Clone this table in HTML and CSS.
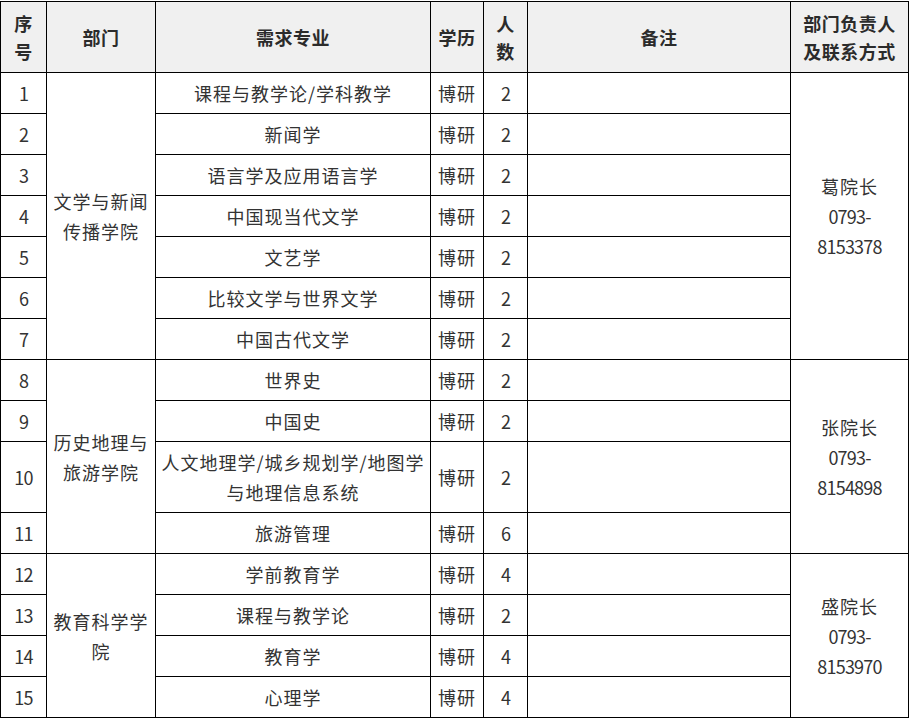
FILE: index.html
```html
<!DOCTYPE html>
<html lang="zh-CN">
<head>
<meta charset="utf-8">
<title>需求表</title>
<link rel="stylesheet" href="styles.css">
</head>
<body>
<table class="tbl">
  <colgroup>
    <col class="c-no">
    <col class="c-dept">
    <col class="c-major">
    <col class="c-edu">
    <col class="c-num">
    <col class="c-note">
    <col class="c-contact">
  </colgroup>
  <thead>
    <tr>
      <th>序<br>号</th>
      <th>部门</th>
      <th>需求专业</th>
      <th>学历</th>
      <th>人<br>数</th>
      <th>备注</th>
      <th>部门负责人<br>及联系方式</th>
    </tr>
  </thead>
  <tbody>
    <tr>
      <td class="num">1</td>
      <td rowspan="7">文学与新闻传播学院</td>
      <td>课程与教学论/学科教学</td>
      <td>博研</td>
      <td class="num">2</td>
      <td></td>
      <td rowspan="7">葛院长<br><span class="num">0793-</span><br><span class="num">8153378</span></td>
    </tr>
    <tr><td class="num">2</td><td>新闻学</td><td>博研</td><td class="num">2</td><td></td></tr>
    <tr><td class="num">3</td><td>语言学及应用语言学</td><td>博研</td><td class="num">2</td><td></td></tr>
    <tr><td class="num">4</td><td>中国现当代文学</td><td>博研</td><td class="num">2</td><td></td></tr>
    <tr><td class="num">5</td><td>文艺学</td><td>博研</td><td class="num">2</td><td></td></tr>
    <tr><td class="num">6</td><td>比较文学与世界文学</td><td>博研</td><td class="num">2</td><td></td></tr>
    <tr><td class="num">7</td><td>中国古代文学</td><td>博研</td><td class="num">2</td><td></td></tr>
    <tr>
      <td class="num">8</td>
      <td rowspan="4">历史地理与旅游学院</td>
      <td>世界史</td>
      <td>博研</td>
      <td class="num">2</td>
      <td></td>
      <td rowspan="4">张院长<br><span class="num">0793-</span><br><span class="num">8154898</span></td>
    </tr>
    <tr><td class="num">9</td><td>中国史</td><td>博研</td><td class="num">2</td><td></td></tr>
    <tr><td class="num">10</td><td>人文地理学/城乡规划学/地图学<br>与地理信息系统</td><td>博研</td><td class="num">2</td><td></td></tr>
    <tr><td class="num">11</td><td>旅游管理</td><td>博研</td><td class="num">6</td><td></td></tr>
    <tr>
      <td class="num">12</td>
      <td rowspan="4">教育科学学院</td>
      <td>学前教育学</td>
      <td>博研</td>
      <td class="num">4</td>
      <td></td>
      <td rowspan="4">盛院长<br><span class="num">0793-</span><br><span class="num">8153970</span></td>
    </tr>
    <tr><td class="num">13</td><td>课程与教学论</td><td>博研</td><td class="num">2</td><td></td></tr>
    <tr><td class="num">14</td><td>教育学</td><td>博研</td><td class="num">4</td><td></td></tr>
    <tr><td class="num">15</td><td>心理学</td><td>博研</td><td class="num">4</td><td></td></tr>
  </tbody>
</table>
</body>
</html>
```

FILE: styles.css
```css
html, body {
  margin: 0;
  padding: 0;
  background: #ffffff;
}

body {
  padding-top: 1px;
  font-family: "Noto Sans CJK SC", "Noto Sans", sans-serif;
  color: #333333;
}

.tbl {
  border-collapse: collapse;
  table-layout: fixed;
  width: 908px;
  font-size: 18px;
  letter-spacing: 1px;
  line-height: 30px;
}

.c-no { width: 46px; }
.c-dept { width: 109px; }
.c-major { width: 275px; }
.c-edu { width: 53px; }
.c-num { width: 44px; }
.c-note { width: 263px; }
.c-contact { width: 118px; }

.tbl th,
.tbl td {
  border: 1px solid #000000;
  padding: 5px 4px;
  text-align: center;
  vertical-align: middle;
  height: 30px;
  word-break: break-all;
}

.tbl th {
  background: #f0f0f0;
  font-weight: bold;
  color: #2b2b2b;
  letter-spacing: 0.5px;
  line-height: 28px;
  padding: 7px 4px;
}

.num {
  letter-spacing: -0.8px;
}
```
